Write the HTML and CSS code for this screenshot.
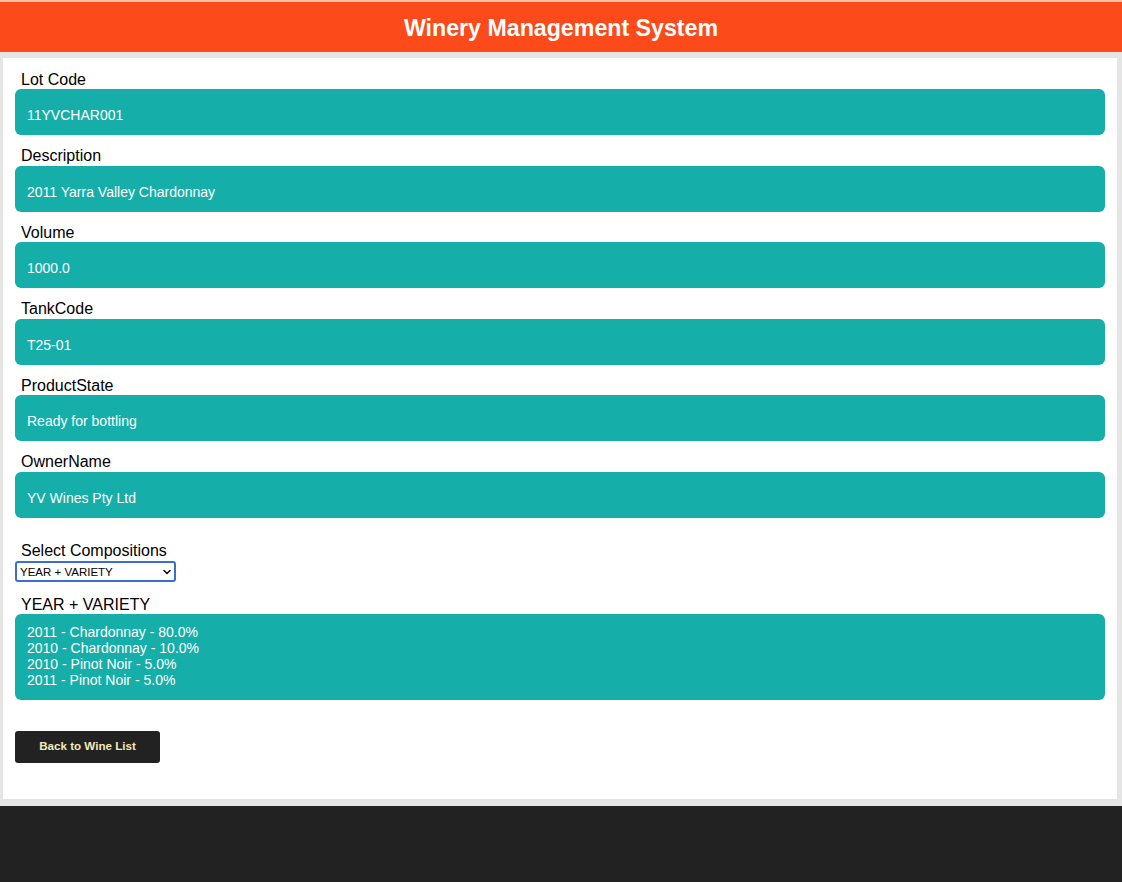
FILE: index.html
```html
<!DOCTYPE html>
<html lang="en">
<head>
<meta charset="utf-8">
<title>Winery Management System</title>
<link rel="stylesheet" href="styles.css">
</head>
<body>
<div class="topline"></div>
<header class="header">
  <h1 class="title">Winery Management System</h1>
</header>
<div class="page">
  <main class="card">
    <div class="field">
      <div class="label">Lot Code</div>
      <div class="value">11YVCHAR001</div>
    </div>
    <div class="field">
      <div class="label">Description</div>
      <div class="value">2011 Yarra Valley Chardonnay</div>
    </div>
    <div class="field">
      <div class="label">Volume</div>
      <div class="value">1000.0</div>
    </div>
    <div class="field">
      <div class="label">TankCode</div>
      <div class="value">T25-01</div>
    </div>
    <div class="field">
      <div class="label">ProductState</div>
      <div class="value">Ready for bottling</div>
    </div>
    <div class="field">
      <div class="label">OwnerName</div>
      <div class="value">YV Wines Pty Ltd</div>
    </div>

    <div class="select-block">
      <div class="label">Select Compositions</div>
      <div class="select-wrap">
        <select class="select">
          <option>YEAR + VARIETY</option>
          <option>YEAR</option>
          <option>VARIETY</option>
          <option>REGION</option>
        </select>
        <svg class="chevron" width="8" height="6" viewBox="0 0 8 6" aria-hidden="true"><path d="M1 1.5 L4 4.5 L7 1.5" fill="none" stroke="#111" stroke-width="1.6" stroke-linecap="round" stroke-linejoin="round"/></svg>
      </div>
    </div>

    <div class="comp-block">
      <div class="label">YEAR + VARIETY</div>
      <div class="comp-box">
        <div class="comp-line">2011 - Chardonnay - 80.0%</div>
        <div class="comp-line">2010 - Chardonnay - 10.0%</div>
        <div class="comp-line">2010 - Pinot Noir - 5.0%</div>
        <div class="comp-line">2011 - Pinot Noir - 5.0%</div>
      </div>
    </div>

    <button class="back-btn" type="button">Back to Wine List</button>
  </main>
</div>
<footer class="footer"></footer>
</body>
</html>
```

FILE: styles.css
```css
html, body {
  margin: 0;
  padding: 0;
}

body {
  background: #e5e5e5;
  font-family: "Liberation Sans", Arial, sans-serif;
  color: #000;
  min-height: 882px;
  display: flex;
  flex-direction: column;
}

.topline {
  height: 2px;
  background: #f8c2a6;
}

.header {
  height: 50px;
  background: #fc4a1a;
  display: flex;
  align-items: center;
  justify-content: center;
}

.title {
  margin: 0;
  color: #fff;
  font-size: 23.2px;
  font-weight: bold;
  line-height: 26px;
  padding-top: 1px;
}

.page {
  padding: 6px 5px 7px 3px;
}

.card {
  background: #fff;
  height: 741px;
  box-sizing: border-box;
  padding: 12.5px 12px 0 12px;
}

.field {
  margin-bottom: 12px;
}

.label {
  font-size: 16px;
  line-height: 18.5px;
  padding-left: 6px;
}

.value {
  background: #16aea9;
  color: #fff;
  border-radius: 6px;
  height: 46px;
  box-sizing: border-box;
  padding: 18px 12px 12px 12px;
  font-size: 14px;
  line-height: 16px;
}

.select-block {
  margin-top: 24.5px;
}

.select-wrap {
  position: relative;
  width: 161px;
  height: 21px;
  margin-top: 0.5px;
}

.select {
  appearance: none;
  -webkit-appearance: none;
  width: 161px;
  height: 21px;
  box-sizing: border-box;
  border: 2px solid #3a6fd2;
  border-radius: 3px;
  background: #fff;
  font-family: "Liberation Sans", Arial, sans-serif;
  font-size: 11.5px;
  color: #000;
  padding: 0 0 0 3px;
  margin: 0;
}

.chevron {
  position: absolute;
  right: 5px;
  top: 8px;
}

.comp-block {
  margin-top: 13.5px;
}

.comp-box {
  background: #16aea9;
  color: #fff;
  border-radius: 6px;
  height: 86px;
  box-sizing: border-box;
  padding: 10px 12px 12px 12px;
  font-size: 14px;
  line-height: 16px;
}

.back-btn {
  display: block;
  margin-top: 31px;
  width: 145px;
  height: 32px;
  border: none;
  border-radius: 3px;
  background: #222;
  color: #f5e9bb;
  font-family: "Liberation Sans", Arial, sans-serif;
  font-size: 11.6px;
  font-weight: bold;
  padding: 0 0 4px 0;
  cursor: pointer;
}

.footer {
  flex: 1;
  background: #222;
}
```
